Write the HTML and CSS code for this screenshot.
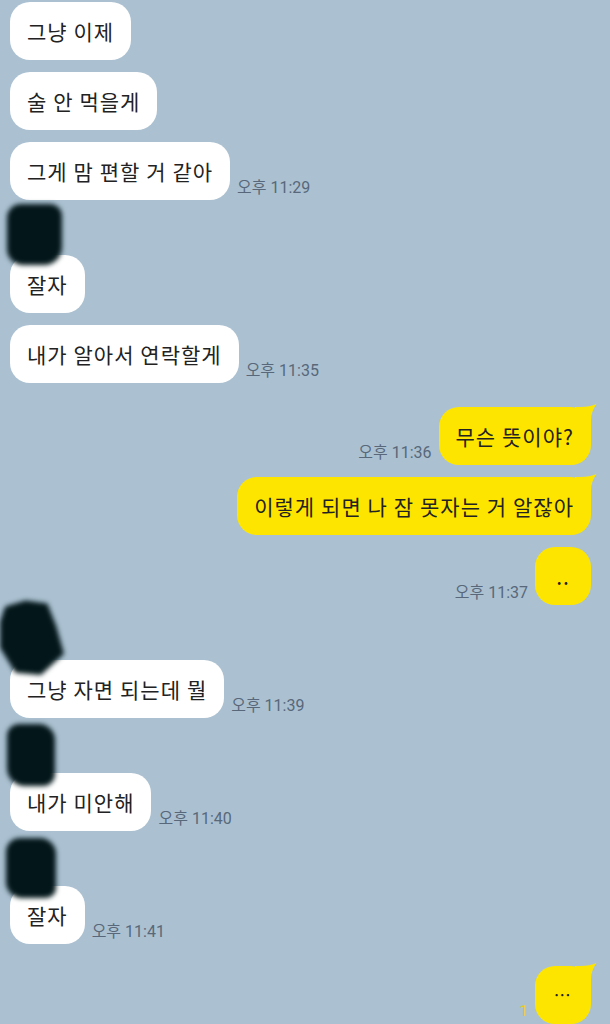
FILE: index.html
```html
<!DOCTYPE html>
<html lang="ko">

<head>
    <meta charset="UTF-8" />
    <meta name="viewport" content="width=device-width, initial-scale=1.0" />
    <title>채팅</title>
    <link rel="stylesheet" href="styles.css">
</head>

<body>
    <div class="chat">
        <div class="row">
            <div class="bubble">그냥 이제</div>
        </div>
        <div class="row">
            <div class="bubble">술 안 먹을게</div>
        </div>
        <div class="row">
            <div class="bubble">그게 맘 편할 거 같아</div>
            <span class="time">오후 11:29</span>
        </div>

        <div class="sender">
            <div class="avatar avatar-1"><div class="blot"></div></div>
        </div>
        <div class="row">
            <div class="bubble">잘자</div>
        </div>
        <div class="row">
            <div class="bubble">내가 알아서 연락할게</div>
            <span class="time">오후 11:35</span>
        </div>

        <!-- my messages -->
        <div class="row mine first-mine">
            <span class="time">오후 11:36</span>
            <div class="bubble has-tail">무슨 뜻이야?
                <svg class="tail" viewBox="0 0 22 24"><path d="M0 3 L6 3 C12 3 17 2 21.5 0 C18 5 16 10 16 16 L16 24 L0 24 Z" /></svg>
            </div>
        </div>
        <div class="row mine">
            <div class="bubble has-tail">이렇게 되면 나 잠 못자는 거 알잖아
                <svg class="tail" viewBox="0 0 22 24"><path d="M0 3 L6 3 C12 3 17 2 21.5 0 C18 5 16 10 16 16 L16 24 L0 24 Z" /></svg>
            </div>
        </div>
        <div class="row mine">
            <span class="time">오후 11:37</span>
            <div class="bubble short">..</div>
        </div>

        <div class="sender">
            <div class="avatar avatar-2"><div class="blot"></div></div>
        </div>
        <div class="row">
            <div class="bubble">그냥 자면 되는데 뭘</div>
            <span class="time">오후 11:39</span>
        </div>

        <div class="sender">
            <div class="avatar avatar-3"><div class="blot"></div></div>
        </div>
        <div class="row">
            <div class="bubble">내가 미안해</div>
            <span class="time">오후 11:40</span>
        </div>

        <div class="sender">
            <div class="avatar avatar-4"><div class="blot"></div></div>
        </div>
        <div class="row">
            <div class="bubble">잘자</div>
            <span class="time">오후 11:41</span>
        </div>

        <div class="row mine last-mine">
            <span class="time unread">1</span>
            <div class="bubble has-tail short typing">⋯
                <svg class="tail" viewBox="0 0 22 24"><path d="M0 3 L6 3 C12 3 17 2 21.5 0 C18 5 16 10 16 16 L16 24 L0 24 Z" /></svg>
            </div>
        </div>
    </div>
</body>

</html>
```

FILE: styles.css
```css
html,
body {
    margin: 0;
    height: 100%;
    overflow: hidden;
    background-color: #abc1d1;
}

body {
    font-family: "Noto Sans CJK KR", "Noto Sans", sans-serif;
    color: #222222;
}

.chat {
    display: flex;
    flex-direction: column;
    gap: 12px;
    padding: 2px 19px 0 10px;
}

.row {
    display: flex;
    align-items: flex-end;
    gap: 7px;
}

.row.mine {
    justify-content: flex-end;
}

.first-mine {
    margin-top: 12px;
}

.last-mine {
    margin-top: 10px;
}

.bubble {
    position: relative;
    background-color: #ffffff;
    border-radius: 20px;
    padding: 15px 17px;
    font-size: 21px;
    line-height: 28px;
    letter-spacing: 1px;
    word-spacing: -1px;
    white-space: nowrap;
}

.mine .bubble {
    background-color: #fee500;
}

.bubble.short {
    min-width: 22px;
    text-align: center;
}

.typing {
    font-size: 17px;
    letter-spacing: 1.5px;
}

.tail {
    position: absolute;
    top: -3px;
    right: -6px;
    width: 22px;
    height: 24px;
}

.tail path {
    fill: #fee500;
}

.time {
    font-family: Roboto, "Noto Sans CJK KR", sans-serif;
    font-size: 16px;
    line-height: 18px;
    color: #58687a;
    margin-bottom: 3px;
    white-space: nowrap;
}

.time.unread {
    color: #f0cf00;
    font-size: 15px;
    margin-bottom: 4px;
}

/* blurred profile pictures */
.sender {
    height: 31px;
}

.avatar {
    position: relative;
    z-index: 1;
    filter: blur(2.5px);
}

.blot {
    width: 100%;
    height: 100%;
    background-color: #03171a;
}

.avatar-1 {
    width: 55px;
    height: 61px;
    margin: -8px 0 0 -3px;
}

.avatar-1 .blot {
    border-radius: 14px 12px 18px 16px;
}

.avatar-2 {
    width: 64px;
    height: 76px;
    margin: -18px 0 0 -10px;
}

.avatar-2 .blot {
    border-radius: 22px 18px 20px 26px;
    clip-path: polygon(8% 10%, 40% 2%, 74% 6%, 88% 36%, 100% 72%, 64% 100%, 24% 97%, 0% 64%, 0% 30%);
}

.avatar-3 {
    width: 48px;
    height: 62px;
    margin: -6px 0 0 -3px;
}

.avatar-3 .blot {
    border-radius: 12px 16px 12px 18px;
}

.avatar-4 {
    width: 50px;
    height: 60px;
    margin: -5px 0 0 -4px;
}

.avatar-4 .blot {
    border-radius: 14px 16px 10px 16px;
}
```
